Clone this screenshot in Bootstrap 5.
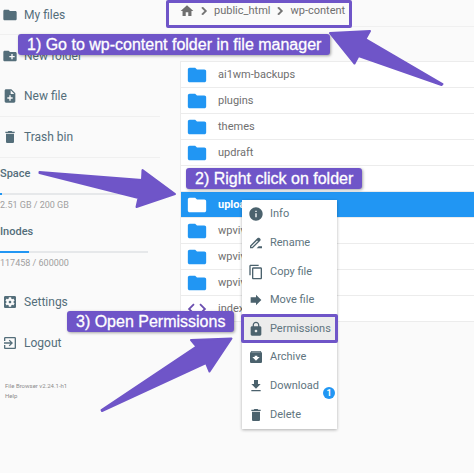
<!DOCTYPE html>
<html lang="en">
<head>
<meta charset="utf-8">
<meta name="viewport" content="width=device-width, initial-scale=1">
<title>File Browser</title>
<link href="https://cdn.jsdelivr.net/npm/bootstrap@5.3.0/dist/css/bootstrap.min.css" rel="stylesheet">
<style>
  :root { --slate: #546e7a; --violet: #6f55c8; --azure: #2196f3; }
  body { font-family: Roboto, "Liberation Sans", sans-serif; font-size: 11px; line-height: 16px; color: #6f6f6f; background: #fafafa; }
  svg { fill: currentColor; flex: none; }
  a, button { color: inherit; text-decoration: none; }
  .side { width: 160px; }
  .side-link { height: 41px; gap: 6px; padding-left: 2px; font-size: 12px; color: var(--slate); }
  .side-link.first { height: 35px; padding-bottom: 5px; }
  .side-link svg, .menu-item svg { width: 16px; height: 16px; }
  .rule { border-bottom: 1px solid #f0f0f0; }
  .quota { height: 58px; color: #a0a0a0; font-size: 9px; line-height: 12px; }
  .quota strong { font-size: 11px; line-height: 16px; font-weight: 500; color: var(--slate); }
  .quotas { height: 123px; padding-top: 8px; }
  .meter { height: 2px; width: 148px; margin: 11px 0 4px; border-radius: 0; background: #e6e8ea; }
  .meter .progress-bar { background: var(--azure); }
  .credits { font-size: 6px; line-height: 10px; padding: 18px 0 0 5px; color: #8c8c8c; }
  .listing { margin-left: 20px; min-width: 0; }
  .crumbs { height: 27px; padding-bottom: 5px; gap: 2px; }
  .crumbs a { padding-right: 2px; }
  .crumbs a + svg + a { padding-left: 2px; }
  .files { margin-top: 34px; background: #fff; border: 1px solid #ececec; border-width: 1px 0 0 1px; }
  .file { height: 26px; gap: 10px; padding-left: 5px; border-bottom: 1px solid #ececec; }
  .file svg { width: 22px; height: 22px; color: var(--azure); }
  .file.chosen, .file.chosen svg { background: var(--azure); color: #fff; font-weight: 700; }
  .file svg.code { color: #6b4fb0; }
  .menu { left: 242px; top: 200px; width: 95px; height: 229px; background: #fff; box-shadow: 0 1px 3px rgba(0,0,0,.3); display: grid; grid-template-rows: repeat(8, 1fr); z-index: 2; }
  .menu-item { border: 0; background: none; gap: 6px; padding: 0 0 0 6px; color: #607580; text-align: left; }
  .menu-item svg { color: #4b626d; }
  .menu-item.current { background: #ececec; }
  .count { right: 2px; bottom: 30px; width: 12px; height: 12px; background: var(--azure); color: #fff; font-size: 9px; line-height: 12px; font-weight: 700; }
  .frame { border: 3px solid var(--violet); border-radius: 2px; z-index: 3; pointer-events: none; }
  .frame-path { left: 166px; top: 0; width: 186px; height: 28px; }
  .frame-item { left: 241px; top: 314px; width: 97px; height: 29px; }
  .note { font: 16px/21px "Liberation Sans", Arial, sans-serif; color: #fff; background: var(--violet); border-radius: 3px; padding: 0 9px; white-space: nowrap; box-shadow: 1px 1px 3px rgba(0,0,0,.35); z-index: 4; -webkit-text-stroke: .3px #fff; }
  .note-1 { left: 18px; top: 34px; }
  .note-2 { left: 186px; top: 168px; }
  .note-3 { left: 67px; top: 311px; }
  .arrows { left: 0; top: 0; z-index: 4; color: var(--violet); pointer-events: none; }
</style>
</head>
<body>
<svg class="d-none" aria-hidden="true">
  <symbol id="i-folder" viewBox="0 0 24 24"><path d="M10 4H4c-1.1 0-1.99.9-1.99 2L2 18c0 1.1.9 2 2 2h16c1.100 0 2-.9 2-2V8c0-1.100-.9-2-2-2h-8l-2-2z"/></symbol>
  <symbol id="i-trash" viewBox="0 0 24 24"><path d="M6 19c0 1.100.9 2 2 2h8c1.100 0 2-.9 2-2V7H6v12zM19 4h-3.500l-1-1h-5l-1 1H5v2h14V4z"/></symbol>
  <symbol id="i-chevron" viewBox="3 3 18 18"><path d="M10 6L8.590 7.410 13.170 12l-4.580 4.590L10 18l6-6z" stroke="currentColor"/></symbol>
</svg>
<div class="position-relative d-flex overflow-hidden min-vh-100">
  <nav class="side flex-shrink-0 d-flex flex-column">
    <a href="#" class="side-link first rule d-flex align-items-center"><svg><use href="#i-folder"/></svg>My files</a>
    <a href="#" class="side-link d-flex align-items-center"><svg viewBox="0 0 24 24"><path d="M20 6h-8l-2-2H4c-1.110 0-1.990.890-1.990 2L2 18c0 1.110.890 2 2 2h16c1.110 0 2-.890 2-2V8c0-1.110-.890-2-2-2zm-1 8h-3v3h-2v-3h-3v-2h3V9h2v3h3v2z"/></svg>New folder</a>
    <a href="#" class="side-link rule d-flex align-items-center"><svg viewBox="0 0 24 24"><path d="M14 2H6c-1.100 0-1.990.9-1.990 2L4 20c0 1.100.890 2 1.990 2H18c1.100 0 2-.9 2-2V8l-6-6zm2 14h-3v3h-2v-3H8v-2h3v-3h2v3h3v2zm-3-7V3.500L18.500 9H13z"/></svg>New file</a>
    <a href="#" class="side-link rule d-flex align-items-center"><svg><use href="#i-trash"/></svg>Trash bin</a>
    <div class="quotas">
      <div class="quota"><strong class="d-block" id="q1">Space</strong>
        <div class="progress meter" role="progressbar" aria-labelledby="q1" aria-valuenow="1" aria-valuemin="0" aria-valuemax="100"><div class="progress-bar" style="width:1.3%"></div></div>2.51 GB / 200 GB</div>
      <div class="quota"><strong class="d-block" id="q2">Inodes</strong>
        <div class="progress meter" role="progressbar" aria-labelledby="q2" aria-valuenow="20" aria-valuemin="0" aria-valuemax="100"><div class="progress-bar" style="width:19.6%"></div></div>117458 / 600000</div>
    </div>
    <a href="#" class="side-link d-flex align-items-center"><svg viewBox="0 0 24 24"><path d="M12 10c-1.100 0-2 .9-2 2s.9 2 2 2 2-.9 2-2-.9-2-2-2zm7-7H5c-1.110 0-2 .9-2 2v14c0 1.100.890 2 2 2h14c1.110 0 2-.9 2-2V5c0-1.100-.890-2-2-2zm-1.750 9c0 .23-.02.46-.05.68l1.480 1.160c.13.11.17.3.08.45l-1.400 2.420c-.09.15-.27.21-.43.15l-1.740-.7c-.36.28-.76.51-1.180.69l-.26 1.850c-.03.17-.18.3-.35.3h-2.800c-.17 0-.32-.13-.35-.29l-.26-1.850c-.43-.18-.82-.41-1.180-.69l-1.740.7c-.16.06-.34 0-.43-.15l-1.400-2.420c-.09-.15-.05-.34.08-.45l1.480-1.160c-.03-.23-.05-.46-.05-.69 0-.23.02-.46.05-.68l-1.480-1.160c-.13-.11-.17-.3-.08-.45l1.400-2.420c.09-.15.27-.21.43-.15l1.740.7c.36-.28.76-.51 1.180-.69l.26-1.850c.03-.17.18-.3.35-.3h2.800c.17 0 .32.13.35.29l.26 1.850c.43.18.82.41 1.180.69l1.740-.7c.16-.06.34 0 .43.15l1.400 2.420c.09.15.05.34-.08.45l-1.480 1.160c.03.23.05.46.05.69z"/></svg>Settings</a>
    <a href="#" class="side-link d-flex align-items-center"><svg viewBox="0 0 24 24"><path d="M10.090 15.590L11.500 17l5-5-5-5-1.410 1.410L12.670 11H3v2h9.670l-2.580 2.590zM19 3H5c-1.110 0-2 .9-2 2v4h2V5h14v14H5v-4H3v4c0 1.100.890 2 2 2h14c1.100 0 2-.9 2-2V5c0-1.100-.9-2-2-2z"/></svg>Logout</a>
    <div class="credits">File Browser v2.24.1-h1<br><a href="#">Help</a></div>
  </nav>

  <main class="listing flex-grow-1">
    <div class="crumbs rule d-flex align-items-center">
      <a href="#" class="d-flex" aria-label="Home"><svg width="14" height="14" viewBox="1 2 22 20"><path d="M10 20v-6h4v6h5v-8h3L12 3 2 12h3v8z"/></svg></a>
      <svg width="12" height="12"><use href="#i-chevron"/></svg>
      <a href="#">public_html</a>
      <svg width="12" height="12"><use href="#i-chevron"/></svg>
      <a href="#">wp-content</a>
    </div>
    <div class="files">
      <div class="file d-flex align-items-center"><svg><use href="#i-folder"/></svg>ai1wm-backups</div>
      <div class="file d-flex align-items-center"><svg><use href="#i-folder"/></svg>plugins</div>
      <div class="file d-flex align-items-center"><svg><use href="#i-folder"/></svg>themes</div>
      <div class="file d-flex align-items-center"><svg><use href="#i-folder"/></svg>updraft</div>
      <div class="file"></div>
      <div class="file chosen d-flex align-items-center"><svg><use href="#i-folder"/></svg>uploads</div>
      <div class="file d-flex align-items-center"><svg><use href="#i-folder"/></svg>wpvivid</div>
      <div class="file d-flex align-items-center"><svg><use href="#i-folder"/></svg>wpvivid</div>
      <div class="file d-flex align-items-center"><svg><use href="#i-folder"/></svg>wpvivid</div>
      <div class="file d-flex align-items-center"><svg class="code" viewBox="0 0 24 24"><path d="M9.400 16.600L4.800 12l4.600-4.600L8 6l-6 6 6 6 1.400-1.400zm5.200 0l4.600-4.600-4.600-4.600L16 6l6 6-6 6-1.400-1.400z"/></svg>index</div>
    </div>
  </main>

  <div class="menu position-absolute">
    <button class="menu-item d-flex align-items-center"><svg viewBox="0 0 24 24"><path d="M12 2C6.480 2 2 6.480 2 12s4.480 10 10 10 10-4.480 10-10S17.520 2 12 2zm1 15h-2v-6h2v6zm0-8h-2V7h2v2z"/></svg>Info</button>
    <button class="menu-item d-flex align-items-center"><svg viewBox="0 0 24 24"><path d="M18.410 5.800L17.200 4.590c-.78-.78-2.050-.78-2.830 0l-2.680 2.680L3 15.960V20h4.040l8.740-8.740 2.630-2.630c.79-.78.79-2.050 0-2.830zM6.210 18H5v-1.210l8.660-8.660 1.210 1.210L6.210 18zM13 20l3-3h5v3z"/></svg>Rename</button>
    <button class="menu-item d-flex align-items-center"><svg viewBox="0 0 24 24"><path d="M16 1H4c-1.100 0-2 .9-2 2v14h2V3h12V1zm3 4H8c-1.100 0-2 .9-2 2v14c0 1.100.9 2 2 2h11c1.100 0 2-.9 2-2V7c0-1.100-.9-2-2-2zm0 16H8V7h11v14z"/></svg>Copy file</button>
    <button class="menu-item d-flex align-items-center"><svg viewBox="0 0 24 24"><path d="M12 8V4l8 8-8 8v-4H4V8z"/></svg>Move file</button>
    <button class="menu-item current d-flex align-items-center"><svg viewBox="0 0 24 24"><path d="M18 8h-1V6c0-2.760-2.240-5-5-5S7 3.240 7 6v2H6c-1.100 0-2 .9-2 2v10c0 1.100.9 2 2 2h12c1.100 0 2-.9 2-2V10c0-1.100-.9-2-2-2zm-6 9c-1.100 0-2-.9-2-2s.9-2 2-2 2 .9 2 2-.9 2-2 2zm3.100-9H8.900V6c0-1.710 1.390-3.100 3.100-3.100 1.710 0 3.100 1.390 3.100 3.100v2z"/></svg>Permissions</button>
    <button class="menu-item d-flex align-items-center"><svg viewBox="0 0 24 24"><path d="M20.540 5.230l-1.390-1.680C18.880 3.210 18.470 3 18 3H6c-.47 0-.88.21-1.160.55L3.460 5.230C3.170 5.570 3 6.020 3 6.500V19c0 1.100.9 2 2 2h14c1.100 0 2-.9 2-2V6.500c0-.48-.17-.93-.46-1.270zM12 17.500L6.500 12H10v-2h4v2h3.500L12 17.500zM5.120 5l.81-1h12l.94 1H5.120z"/></svg>Archive</button>
    <button class="menu-item d-flex align-items-center"><svg viewBox="0 0 24 24"><path d="M19 9h-4V3H9v6H5l7 7 7-7zM5 18v2h14v-2H5z"/></svg>Download</button>
    <button class="menu-item d-flex align-items-center"><svg><use href="#i-trash"/></svg>Delete</button>
    <span class="count position-absolute rounded-circle text-center">1</span>
  </div>

  <div class="frame frame-path position-absolute"></div>
  <div class="frame frame-item position-absolute"></div>
  <div class="note note-1 position-absolute">1) Go to wp-content folder in file manager</div>
  <div class="note note-2 position-absolute">2) Right click on folder</div>
  <div class="note note-3 position-absolute">3) Open Permissions</div>
  <svg class="arrows position-absolute" width="474" height="473" viewBox="0 0 474 473" stroke="currentColor" stroke-width="2" stroke-linejoin="round" aria-hidden="true">
    <path d="M330 33L370 31L365.500 39L442.500 84L441.500 85L358.500 56L354.500 63.500z"/>
    <path d="M175 194L142.500 170L142 180L39.500 172L39.500 173L138.500 198L136.500 207z"/>
    <path d="M231.500 338.500L191 340L196.500 346.500L101.500 410L102 411L206 363L209.500 371.500z"/>
  </svg>
</div>
<script src="https://cdn.jsdelivr.net/npm/bootstrap@5.3.0/dist/js/bootstrap.bundle.min.js"></script>
</body>
</html>
